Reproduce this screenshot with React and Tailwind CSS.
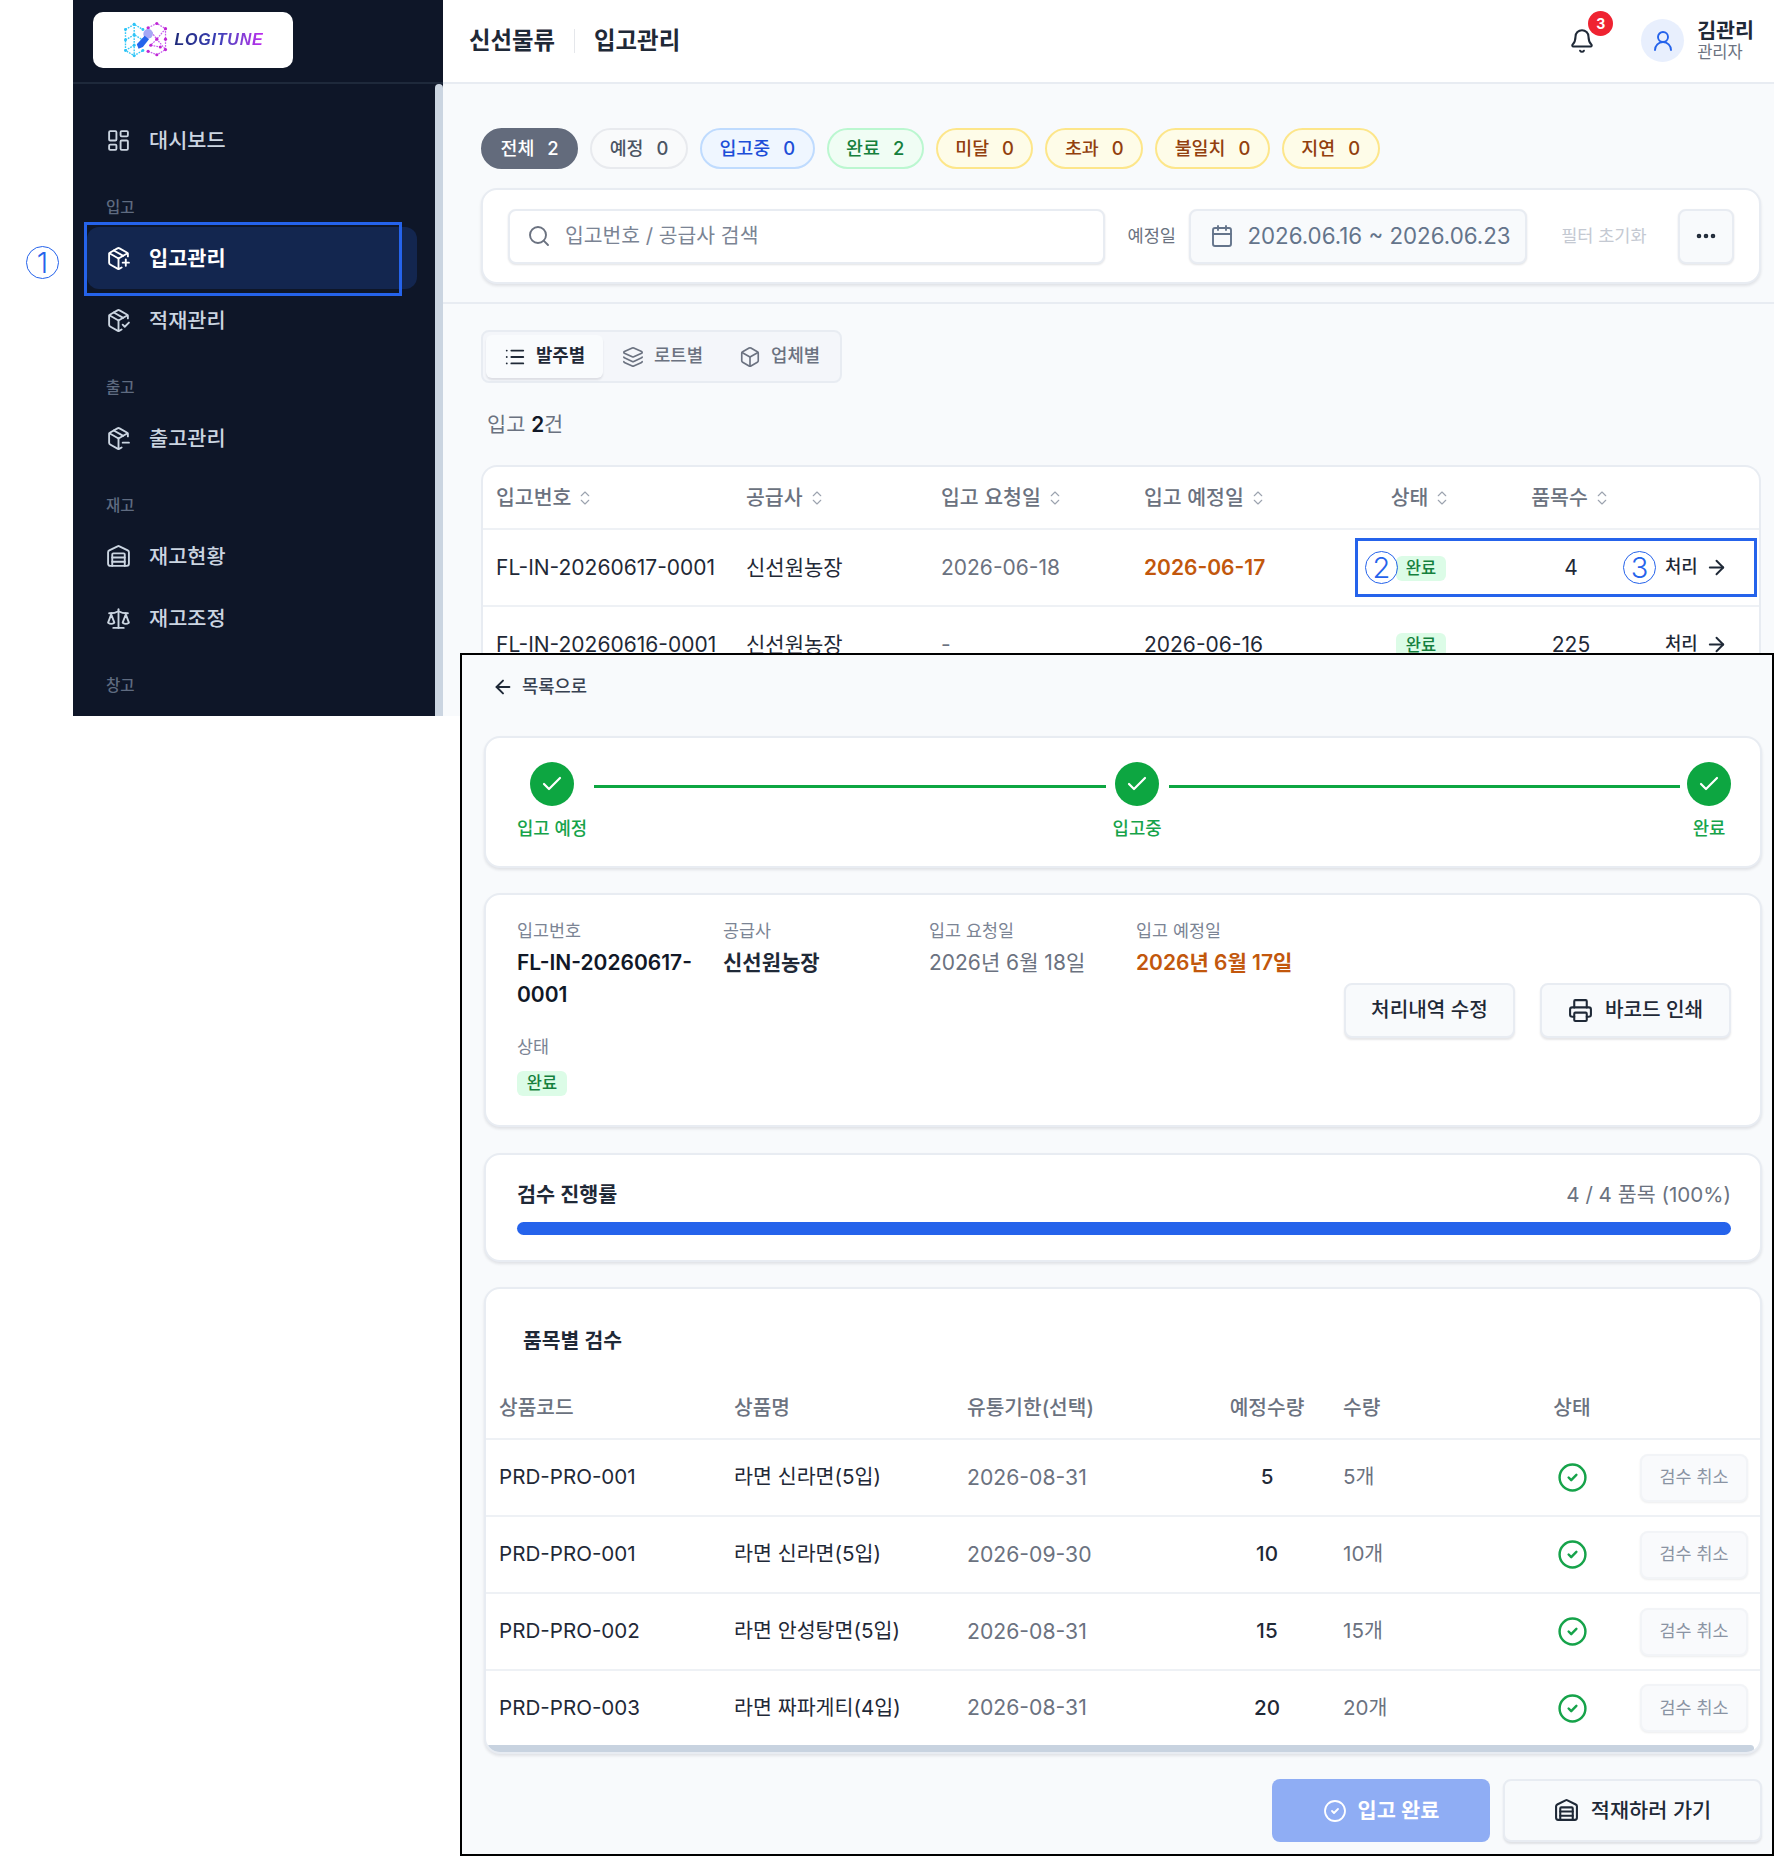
import React from 'react';
import {
  LayoutDashboard, PackagePlus, PackageCheck, PackageMinus, Warehouse, Scale, Bell, UserRound, Search, Calendar,
  Ellipsis, List, Layers, Box, ChevronsUpDown, ArrowRight, ArrowLeft, Check, CircleCheck, Printer,
} from 'lucide-react';

const FONT = "font-['Inter','Noto_Sans_CJK_KR','Noto_Sans',sans-serif]";

function Logo() {
  const leftPts = [[4, 10], [14, 4], [24, 10], [4, 22], [14, 16], [24, 22], [4, 34], [14, 28], [24, 34], [14, 40]];
  const rightPts = [[30, 8], [40, 3], [50, 9], [50, 21], [50, 33], [40, 39], [30, 35], [40, 21], [33, 28], [44, 30]];
  return (
    <svg width="47" height="42" viewBox="0 0 54 44" className="shrink-0">
      <path d="M4 10L14 4L24 10M4 10V34L14 40L24 34M14 4V40M4 22L14 16L24 22M4 34L14 28" fill="none" stroke="#38c8f5" strokeWidth="1.6" strokeDasharray="2 1.2" />
      <path d="M30 8L40 3L50 9V33L40 39L30 35M30 8L40 21L50 33M50 9L40 21L33 28L44 30" fill="none" stroke="#c65cf0" strokeWidth="1.4" strokeDasharray="2 1.2" />
      {leftPts.map(([x, y], i) => <circle key={i} cx={x} cy={y} r="1.7" fill="#2cc4f8" />)}
      {rightPts.map(([x, y], i) => <circle key={i} cx={x} cy={y} r="1.8" fill="#c026d3" />)}
      <circle cx="30" cy="15" r="5.5" fill="#a5a8f5" />
      <path d="M17 27L26 17L31 21L24 30L19 32Z" fill="#2563eb" />
    </svg>
  );
}

function NavItem({ icon: Icon, label, active }) {
  return (
    <div className={`flex h-[62px] items-center gap-[18px] rounded-xl pl-[19px] ${active ? 'bg-[#13264f] text-white font-semibold' : 'text-[#cbd5e1] font-medium'}`}>
      <Icon size={25} strokeWidth={1.8} />
      <span className="pt-[2px] text-[20.8px]">{label}</span>
    </div>
  );
}

function NavLabel({ children }) {
  return <div className="mt-[27px] mb-[9px] flex h-5 items-center pl-[19px] text-[15.5px] font-medium text-[#5f6b80]">{children}</div>;
}

function Sidebar() {
  return (
    <aside className="flex w-[370px] shrink-0 flex-col bg-[#0e1628]">
      <div className="flex h-[84px] items-start border-b-2 border-[#1e293b] pl-5 pt-3">
        <div className="flex h-14 w-[200px] items-center justify-center gap-[5px] rounded-[10px] bg-white">
          <Logo />
          <span className="bg-gradient-to-r from-[#1e2a78] via-[#3b3fb8] to-[#c026f0] bg-clip-text font-['Liberation_Sans',sans-serif] text-[16px] font-bold italic tracking-[0.8px] text-transparent">LOGITUNE</span>
        </div>
      </div>
      <div className="flex min-h-0 flex-1">
        <nav className="min-w-0 flex-1 pl-[14px] pr-[18px] pt-[25px]">
          <NavItem icon={LayoutDashboard} label="대시보드" />
          <NavLabel>입고</NavLabel>
          <NavItem icon={PackagePlus} label="입고관리" active />
          <NavItem icon={PackageCheck} label="적재관리" />
          <NavLabel>출고</NavLabel>
          <NavItem icon={PackageMinus} label="출고관리" />
          <NavLabel>재고</NavLabel>
          <NavItem icon={Warehouse} label="재고현황" />
          <NavItem icon={Scale} label="재고조정" />
          <NavLabel>창고</NavLabel>
        </nav>
        <div className="w-2 shrink-0 rounded-t-md bg-[#cbd5e1]" />
      </div>
    </aside>
  );
}

const pills = [
  ['전체', '2', 'bg-[#636b7c] border-[#636b7c] text-white'],
  ['예정', '0', 'bg-[#f9fafb] border-[#e8eaee] text-[#4b5563]'],
  ['입고중', '0', 'bg-[#eff6ff] border-[#bfdbfe] text-[#1d4ed8]'],
  ['완료', '2', 'bg-[#f0fdf4] border-[#bbf7d0] text-[#15803d]'],
  ['미달', '0', 'bg-[#fefce8] border-[#fde68a] text-[#92400e]'],
  ['초과', '0', 'bg-[#fefce8] border-[#fde68a] text-[#92400e]'],
  ['불일치', '0', 'bg-[#fefce8] border-[#fde68a] text-[#92400e]'],
  ['지연', '0', 'bg-[#fefce8] border-[#fde68a] text-[#92400e]'],
];

function Header() {
  return (
    <header className="flex h-[84px] shrink-0 items-center border-b-2 border-[#e8ecf2] bg-white pb-[1px] pl-[26px]">
      <span className="text-[23.4px] font-semibold text-[#1f2937]">신선물류</span>
      <span className="mx-[19px] h-6 w-px bg-[#e5e7eb]" />
      <span className="text-[23.4px] font-semibold text-[#1f2937]">입고관리</span>
      <div className="ml-auto flex items-center pr-5">
        <div className="relative mr-[46px]">
          <Bell size={26} strokeWidth={1.9} className="text-[#1f2937]" />
          <span className="absolute -right-[18px] -top-[17px] flex h-[25px] w-[25px] items-center justify-center rounded-full bg-[#ef2331] text-[14px] font-bold text-white">3</span>
        </div>
        <div className="mr-[13px] flex h-[43px] w-[43px] items-center justify-center rounded-full bg-[#e8effd] text-[#2563eb]">
          <UserRound size={24} strokeWidth={1.9} />
        </div>
        <div className="flex flex-col">
          <span className="text-[20.6px] font-semibold leading-[22px] text-[#1f2937]">김관리</span>
          <span className="text-[16.5px] leading-[20px] text-[#6b7280]">관리자</span>
        </div>
      </div>
    </header>
  );
}

function Filters() {
  return (
    <section className="shrink-0 border-b-2 border-[#e8ecf2] pb-[18px] pl-[38px] pr-[13px] pt-[44px]">
      <div className="flex gap-3">
        {pills.map(([l, n, c]) => (
          <div key={l} className={`flex h-[41px] items-center gap-[13px] rounded-full border-2 px-[17.5px] text-[18.4px] font-medium ${c}`}>
            <span>{l}</span><span>{n}</span>
          </div>
        ))}
      </div>
      <div className="mt-[19px] flex h-[96px] items-center rounded-2xl border-2 border-[#e8ecf2] bg-white pl-[25px] pr-[25px] shadow-[0_2px_3px_rgba(15,23,42,0.1)]">
        <div className="flex h-[55px] w-[598px] items-center gap-[14px] rounded-lg border-2 border-[#e8ecf2] bg-white pl-[17px] shadow-[0_1px_2px_rgba(15,23,42,0.12)]">
          <Search size={24} strokeWidth={1.9} className="text-[#6b7280]" />
          <span className="text-[20.4px] text-[#7b8494]">입고번호 / 공급사 검색</span>
        </div>
        <span className="ml-[22px] w-[62px] text-[17.6px] text-[#6b7280]">예정일</span>
        <div className="flex h-[55px] w-[338px] items-center gap-[13px] rounded-lg border-2 border-[#e8ecf2] bg-[#f8fafc] pl-[19px] shadow-[0_1px_2px_rgba(15,23,42,0.12)]">
          <Calendar size={24} strokeWidth={1.9} className="text-[#64748b]" />
          <span className="text-[22.3px] text-[#64748b]">2026.06.16 ~ 2026.06.23</span>
        </div>
        <span className="ml-[34px] w-[117px] text-[17.5px] text-[#c4c9d2]">필터 초기화</span>
        <div className="flex h-[55px] w-[56px] items-center justify-center rounded-lg border-2 border-[#e8ecf2] bg-[#f8fafc] shadow-[0_1px_2px_rgba(15,23,42,0.12)]">
          <Ellipsis size={24} strokeWidth={2.6} className="text-[#1f2937]" />
        </div>
      </div>
    </section>
  );
}

function Tabs() {
  return (
    <div className="flex h-[53px] w-[361px] items-center rounded-lg border-2 border-[#e8ecf2] bg-[#f4f6fa] pl-[3px]">
      <div className="flex h-[43px] w-[117px] items-center gap-[10px] rounded-md bg-[#f9fbfd] pl-[18px] text-[17.8px] font-semibold text-[#1f2937] shadow-[0_2px_2px_rgba(15,23,42,0.1)]">
        <List size={22} strokeWidth={2} /><span>발주별</span>
      </div>
      <div className="flex items-center gap-[10px] pl-[19px] text-[17.8px] font-medium text-[#6b7280]">
        <Layers size={22} strokeWidth={1.8} /><span>로트별</span>
      </div>
      <div className="flex items-center gap-[10px] pl-[36px] text-[17.8px] font-medium text-[#6b7280]">
        <Box size={22} strokeWidth={1.8} /><span>업체별</span>
      </div>
    </div>
  );
}

const listCols = 'grid grid-cols-[250px_195px_203px_206px_142px_158px_1fr] items-center pl-[13px]';

function SortH({ children, center }) {
  return (
    <div className={`flex items-center gap-[5px] text-[20.5px] font-medium text-[#6b7280] ${center ? 'justify-center' : ''}`}>
      <span>{children}</span>
      <ChevronsUpDown size={18} strokeWidth={1.5} className="text-[#9ca3af]" />
    </div>
  );
}

function ListRow({ id, supplier, req, due, dueCls, n }) {
  return (
    <div className={`${listCols} h-[77px] border-b-2 border-[#eef1f5] text-[21px]`}>
      <span className="text-[#1f2937]">{id}</span>
      <span className="text-[#1f2937]">{supplier}</span>
      <span className="text-[#6b7280]">{req}</span>
      <span className={dueCls}>{due}</span>
      <div className="flex justify-center pt-[1px]"><Badge /></div>
      <span className="text-center text-[#1f2937]">{n}</span>
      <div className="flex items-center gap-[7px] pl-[15px] text-[17.8px] font-medium text-[#1f2937]">
        <span>처리</span><ArrowRight size={23} strokeWidth={2} />
      </div>
    </div>
  );
}

function Badge() {
  return <span className="inline-flex h-[25px] w-[50px] items-center justify-center rounded-md bg-[#dcfce7] text-[16.5px] font-medium text-[#15803d]">완료</span>;
}

function Card({ className = '', children }) {
  return <div className={`rounded-2xl border-2 border-[#e8ecf2] bg-white shadow-[0_2px_3px_rgba(15,23,42,0.1)] ${className}`}>{children}</div>;
}

function MainTop() {
  return (
    <div className="min-h-0 flex-1 overflow-hidden pl-[38px] pr-[13px] pt-[26px]">
      <Tabs />
      <p className="mt-[28px] h-7 pl-[6px] text-[20.8px] leading-7 text-[#6b7280]">입고 <b className="font-semibold text-[#111827]">2</b>건</p>
      <div className="mt-[26px] rounded-t-2xl border-2 border-b-0 border-[#e8ecf2] bg-white">
        <div className={`${listCols} h-[63px] border-b-2 border-[#eef1f5] pt-[1px]`}>
          <SortH>입고번호</SortH><SortH>공급사</SortH><SortH>입고 요청일</SortH><SortH>입고 예정일</SortH>
          <SortH center>상태</SortH><SortH center>품목수</SortH><div />
        </div>
        <ListRow id="FL-IN-20260617-0001" supplier="신선원농장" req="2026-06-18" due="2026-06-17" dueCls="font-semibold text-[#c2570c]" n="4" />
        <ListRow id="FL-IN-20260616-0001" supplier="신선원농장" req="-" due="2026-06-16" dueCls="text-[#1f2937]" n="225" />
      </div>
    </div>
  );
}

function Step({ label }) {
  return (
    <div className="flex shrink-0 flex-col items-center">
      <div className="flex h-11 w-11 items-center justify-center rounded-full bg-[#0da641] text-white">
        <Check size={24} strokeWidth={2.2} />
      </div>
      <span className="mt-[11px] text-[17.8px] font-medium leading-[24px] text-[#16a34a]">{label}</span>
    </div>
  );
}

function Connector() {
  return <div className="mx-[7px] mt-[23px] h-[3px] flex-1 bg-[#0da641]" />;
}

function InfoField({ label, children, cls = '' }) {
  return (
    <div>
      <div className="h-5 text-[17.4px] leading-5 text-[#7b8494]">{label}</div>
      <div className={`mt-[6px] text-[21px] leading-8 ${cls}`}>{children}</div>
    </div>
  );
}

const rows = [
  ['PRD-PRO-001', '라면 신라면(5입)', '2026-08-31', '5', '5개'],
  ['PRD-PRO-001', '라면 신라면(5입)', '2026-09-30', '10', '10개'],
  ['PRD-PRO-002', '라면 안성탕면(5입)', '2026-08-31', '15', '15개'],
  ['PRD-PRO-003', '라면 짜파게티(4입)', '2026-08-31', '20', '20개'],
];

const itemCols = 'grid grid-cols-[235px_233px_244px_112px_185px_128px_1fr] items-center pl-[13px]';

function Detail() {
  return (
    <div className="absolute left-[460px] top-[653px] flex h-[1203px] w-[1314px] flex-col border-2 border-black bg-[#f8fafc] pl-[22px] pr-[10px]">
      <div className="flex h-[64px] shrink-0 items-center gap-[8px] pl-[8px] text-[17.7px] font-medium text-[#374151]">
        <ArrowLeft size={22} strokeWidth={2.1} className="text-[#1f2937]" />
        <span>목록으로</span>
      </div>
      <Card className="mt-[17px] flex h-[132px] shrink-0 items-start pl-[31px] pr-[29px] pt-[24px]">
        <Step label="입고 예정" />
        <Connector />
        <Step label="입고중" />
        <Connector />
        <Step label="완료" />
      </Card>
      <Card className="mt-[25px] flex h-[234px] shrink-0 items-center justify-between pl-[31px] pr-[29px]">
        <div className="grid h-[178px] w-[825px] grid-cols-[190px_190px_191px_200px] content-start gap-x-[16px]">
          <InfoField label="입고번호" cls="font-semibold text-[#111827]">FL-IN-20260617-0001</InfoField>
          <InfoField label="공급사" cls="font-semibold text-[#1f2937]">신선원농장</InfoField>
          <InfoField label="입고 요청일" cls="text-[#6b7280]">2026년 6월 18일</InfoField>
          <InfoField label="입고 예정일" cls="font-semibold text-[#c2570c]">2026년 6월 17일</InfoField>
          <div className="mt-[26px]">
            <div className="h-5 text-[17.4px] leading-5 text-[#7b8494]">상태</div>
            <div className="mt-[14px] flex"><Badge /></div>
          </div>
        </div>
        <div className="flex gap-[25px]">
          <div className="flex h-[55px] w-[171px] items-center justify-center rounded-lg border-2 border-[#e8ecf2] bg-[#f8fafc] text-[20.2px] font-medium text-[#1f2937] shadow-[0_2px_2px_rgba(15,23,42,0.1)]">처리내역 수정</div>
          <div className="flex h-[55px] w-[191px] items-center justify-center gap-[12px] rounded-lg border-2 border-[#e8ecf2] bg-[#f8fafc] text-[20.2px] font-medium text-[#1f2937] shadow-[0_2px_2px_rgba(15,23,42,0.1)]">
            <Printer size={25} strokeWidth={2} /><span>바코드 인쇄</span>
          </div>
        </div>
      </Card>
      <Card className="mt-[26px] h-[109px] shrink-0 pl-[31px] pr-[29px] pt-[26px]">
        <div className="flex h-[28px] items-center justify-between">
          <span className="text-[20.7px] font-semibold text-[#1f2937]">검수 진행률</span>
          <span className="text-[20.6px] text-[#6b7280]">4 / 4 품목 (100%)</span>
        </div>
        <div className="mt-[13px] h-[13px] rounded-full bg-[#2563eb]" />
      </Card>
      <Card className="mt-[25px] h-[467px] shrink-0 overflow-hidden">
        <div className="flex h-[70px] items-center pl-[37px] pt-[34px] text-[20.4px] font-semibold text-[#1f2937]">품목별 검수</div>
        <div className={`${itemCols} mt-[31px] h-[50px] border-b-2 border-[#eef1f5] pb-[12px] text-[20.3px] font-medium text-[#6b7280]`}>
          <span>상품코드</span><span>상품명</span><span>유통기한(선택)</span>
          <span className="text-center">예정수량</span><span className="pl-5">수량</span><span className="text-center">상태</span><span />
        </div>
        {rows.map((r, i) => (
          <div key={i} className={`${itemCols} text-[20.6px] ${i < 3 ? 'h-[77px] border-b-2 border-[#eef1f5]' : 'h-[74px]'}`}>
            <span className="text-[#1f2937]">{r[0]}</span>
            <span className="text-[#1f2937]">{r[1]}</span>
            <span className="text-[21.2px] text-[#6b7280]">{r[2]}</span>
            <span className="text-center font-medium text-[#1f2937]">{r[3]}</span>
            <span className="pl-5 text-[#6b7280]">{r[4]}</span>
            <span className="flex justify-center text-[#16a34a]"><CircleCheck size={31} strokeWidth={1.9} /></span>
            <div className="flex pl-[4px]">
              <div className="flex h-[48px] w-[108px] items-center justify-center rounded-lg border-2 border-[#f2f4f7] bg-[#f9fafc] text-[17.4px] text-[#8a93a3] shadow-[0_1px_2px_rgba(15,23,42,0.08)]">검수 취소</div>
            </div>
          </div>
        ))}
        <div className="mr-[6px] h-[7px] rounded-full bg-[#c8d3e0]" />
      </Card>
      <div className="mt-[25px] flex justify-end gap-[13px]">
        <div className="flex h-[63px] w-[218px] items-center justify-center gap-[11px] rounded-lg bg-[#8fadf4] text-[20.8px] font-semibold text-white">
          <CircleCheck size={24} strokeWidth={1.8} /><span>입고 완료</span>
        </div>
        <div className="flex h-[63px] w-[259px] items-center justify-center gap-[12px] rounded-lg border-2 border-[#e8ecf2] bg-[#f8fafc] text-[20.8px] font-medium text-[#1f2937] shadow-[0_2px_2px_rgba(15,23,42,0.1)]">
          <Warehouse size={25} strokeWidth={2} /><span>적재하러 가기</span>
        </div>
      </div>
    </div>
  );
}

function Marker({ className, children }) {
  return <span className={`absolute flex items-center justify-center rounded-full border-[1.5px] border-[#2563eb] text-[29px] font-light text-[#2563eb] ${className}`}>{children}</span>;
}

export default function App() {
  return (
    <div className={`relative h-[1856px] w-[1774px] overflow-hidden bg-white ${FONT}`}>
      <div className="ml-[73px] flex h-[716px] w-[1701px] overflow-hidden">
        <Sidebar />
        <main className="flex min-w-0 flex-1 flex-col bg-[#f8fafc]">
          <Header />
          <Filters />
          <MainTop />
        </main>
      </div>
      <Detail />
      <div className="absolute left-[84px] top-[222px] h-[74px] w-[318px] border-[3px] border-[#2563eb]" />
      <Marker className="left-[26px] top-[246px] h-[33px] w-[33px]">1</Marker>
      <div className="absolute left-[1355px] top-[538px] h-[59px] w-[402px] border-[3px] border-[#2563eb]" />
      <Marker className="left-[1365px] top-[551px] h-[33px] w-[33px]">2</Marker>
      <Marker className="left-[1623px] top-[551px] h-[33px] w-[33px]">3</Marker>
    </div>
  );
}
